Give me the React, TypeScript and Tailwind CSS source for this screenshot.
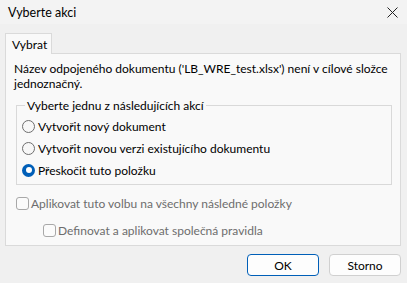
import React from "react";

const font = { fontFamily: 'Lato, "Liberation Sans", Arial, sans-serif' };

function Radio({ checked, label }: { checked?: boolean; label: string }) {
  return (
    <label className="flex items-center h-[22px] gap-[3px]">
      {checked ? (
        <span className="w-[13px] h-[13px] rounded-full bg-[#005fb8] flex items-center justify-center">
          <span className="w-[6px] h-[6px] rounded-full bg-white" />
        </span>
      ) : (
        <span className="w-[13px] h-[13px] rounded-full border border-[#6e6e6e] bg-[#f7f7f7]" />
      )}
      <span>{label}</span>
    </label>
  );
}

function Check({ label }: { label: string }) {
  return (
    <label className="flex items-center h-[13px] gap-[2px] text-[#6d6d6d]">
      <span className="w-[13px] h-[13px] rounded-[3px] border border-[#a8a8a8] bg-[#fbfbfb]" />
      <span>{label}</span>
    </label>
  );
}

export default function App() {
  return (
    <div
      className="w-[407px] h-[283px] bg-[#f0f0f0] text-[12px] leading-[15px] text-black flex flex-col overflow-hidden"
      style={font}
    >
      {/* title bar */}
      <div className="h-[24px] shrink-0 bg-[#f3f3f3] flex items-center justify-between pl-[8px] pr-[8px]">
        <span className="text-[12.5px]">Vyberte akci</span>
        <svg width="11" height="11" viewBox="0 0 11 11" className="mr-[1px]">
          <path d="M0.5 0.5 L10.5 10.5 M10.5 0.5 L0.5 10.5" stroke="#222" strokeWidth="1" />
        </svg>
      </div>

      {/* tabs */}
      <div className="pl-[5px] pr-[6px] pt-[9px] shrink-0">
        <div className="flex">
          <div className="h-[21px] w-[47px] border border-b-0 border-[#dadada] bg-[#f9f9f9] pl-[6px] pt-[3px] -mb-px relative z-10">
            Vybrat
          </div>
        </div>
        <div className="h-[193px] border border-[#dadada] bg-[#f9f9f9] pl-[8px] pr-[7px] pt-[7px]">
          <p className="whitespace-nowrap">
            Název odpojeného dokumentu ('LB_WRE_test.xlsx') není v cílové složce
            <br />
            jednoznačný.
          </p>

          <fieldset className="mt-[7px] ml-[2px] mr-[1px] border border-[#d9d9d9] pl-[5px] pb-[3px] pt-[2px]">
            <legend className="px-[2px] ml-[3px]">Vyberte jednu z následujících akcí</legend>
            <Radio label="Vytvořit nový dokument" />
            <Radio label="Vytvořit novou verzi existujícího dokumentu" />
            <Radio checked label="Přeskočit tuto položku" />
          </fieldset>

          <div className="mt-[12px] ml-[2px] flex flex-col gap-[14px]">
            <Check label="Aplikovat tuto volbu na všechny následné položky" />
            <div className="pl-[27px]">
              <Check label="Definovat a aplikovat společná pravidla" />
            </div>
          </div>
        </div>
      </div>

      {/* buttons */}
      <div className="flex justify-end gap-[10px] pr-[6px] pt-[8px]">
        <button className="w-[72px] h-[22px] rounded-[4px] border border-[#005fb8] bg-[#fdfdfd]">
          OK
        </button>
        <button className="w-[72px] h-[22px] rounded-[4px] border border-[#d0d0d0] bg-[#fdfdfd]">
          Storno
        </button>
      </div>
    </div>
  );
}
